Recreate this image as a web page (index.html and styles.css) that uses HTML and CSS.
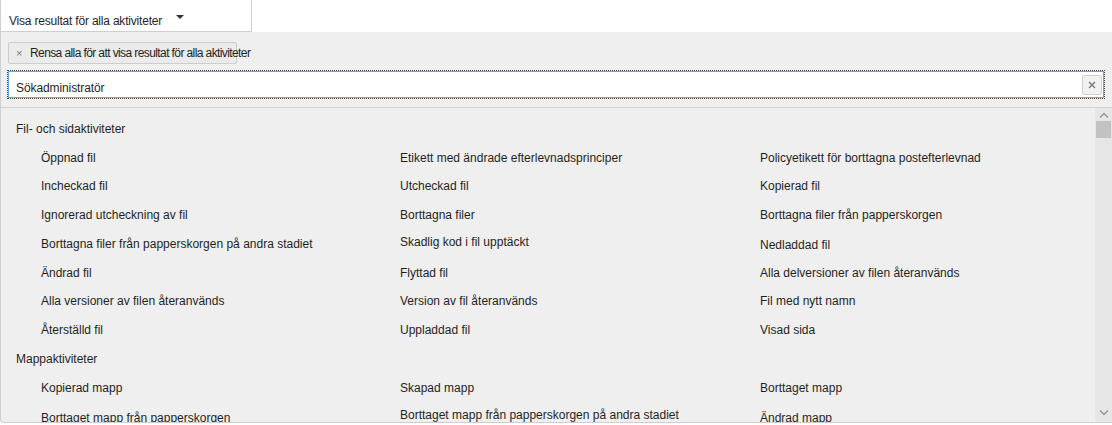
FILE: index.html
```html
<!DOCTYPE html>
<html lang="sv">
<head>
<meta charset="utf-8">
<link rel="stylesheet" href="styles.css">
</head>
<body>
<div class="dropdown">
  <span class="dd-label">Visa resultat för alla aktiviteter</span>
  <span class="dd-caret"></span>
</div>
<div class="panel">
  <div class="chip-row">
    <div class="chip"><span class="chip-x">×</span><span class="chip-text">Rensa alla för att visa resultat för alla aktiviteter</span></div>
  </div>
  <div class="search-row">
    <div class="search">
      <span class="search-text">Sökadministratör</span>
      <span class="clear-btn"><svg width="8" height="8" viewBox="0 0 8 8"><path d="M1 1L7 7M7 1L1 7" stroke="#777" stroke-width="1.4"/></svg></span>
    </div>
  </div>
  <div class="list-area">
    <div class="list">
      <div class="cat">Fil- och sidaktiviteter</div>
      <div class="items">
        <div>Öppnad fil</div><div>Etikett med ändrade efterlevnadsprinciper</div><div>Policyetikett för borttagna postefterlevnad</div>
        <div>Incheckad fil</div><div>Utcheckad fil</div><div>Kopierad fil</div>
        <div>Ignorerad utcheckning av fil</div><div>Borttagna filer</div><div>Borttagna filer från papperskorgen</div>
        <div>Borttagna filer från papperskorgen på andra stadiet</div><div class="up">Skadlig kod i fil upptäckt</div><div class="down">Nedladdad fil</div>
        <div>Ändrad fil</div><div>Flyttad fil</div><div>Alla delversioner av filen återanvänds</div>
        <div>Alla versioner av filen återanvänds</div><div>Version av fil återanvänds</div><div>Fil med nytt namn</div>
        <div>Återställd fil</div><div>Uppladdad fil</div><div>Visad sida</div>
      </div>
      <div class="cat">Mappaktiviteter</div>
      <div class="items items-second">
        <div>Kopierad mapp</div><div>Skapad mapp</div><div>Borttaget mapp</div>
        <div class="down">Borttaget mapp från papperskorgen</div><div class="up">Borttaget mapp från papperskorgen på andra stadiet</div><div class="down">Ändrad mapp</div>
      </div>
    </div>
    <div class="scrollbar">
      <span class="sb-arrow sb-up"><svg width="10" height="6" viewBox="0 0 10 6"><path d="M1 5.5L5 1.5L9 5.5" fill="none" stroke="#8a8a8a" stroke-width="1.2"/></svg></span>
      <span class="sb-thumb"></span>
      <span class="sb-fill"></span>
      <span class="sb-arrow sb-down"><svg width="10" height="6" viewBox="0 0 10 6"><path d="M1 0.5L5 4.5L9 0.5" fill="none" stroke="#8a8a8a" stroke-width="1.2"/></svg></span>
    </div>
  </div>
</div>
</body>
</html>
```
FILE: styles.css
```css
html, body {
  margin: 0;
  padding: 0;
  background: #ffffff;
}
body {
  font-family: "Liberation Sans", Arial, sans-serif;
  font-size: 12px;
  color: #1f1f1f;
  width: 1112px;
  height: 425px;
  overflow: hidden;
}
.dropdown {
  box-sizing: border-box;
  width: 252px;
  height: 32px;
  border: 1px solid #cfcfcf;
  border-top: none;
  background: #ffffff;
  display: flex;
  align-items: center;
  padding: 11px 0 0 8px;
}
.dd-label {
  letter-spacing: -0.2px;
}
.dd-caret {
  margin-left: 14px;
  margin-top: -8px;
  width: 0;
  height: 0;
  border-left: 4px solid transparent;
  border-right: 4px solid transparent;
  border-top: 4px solid #333;
}
.panel {
  box-sizing: border-box;
  width: 1113px;
  height: 391px;
  background: #efefef;
  border: 1px solid #cfcfcf;
  border-top: none;
  border-bottom-left-radius: 4px;
  display: flex;
  flex-direction: column;
  overflow: hidden;
}
.chip-row {
  padding: 10px 0 0 7px;
  height: 22px;
}
.chip {
  box-sizing: border-box;
  width: 229px;
  height: 22px;
  border: 1px solid #cdcdcd;
  border-radius: 2px;
  background: #ebebeb;
  display: flex;
  align-items: center;
  white-space: nowrap;
  overflow: visible;
}
.chip-x {
  flex-shrink: 0;
  color: #777;
  font-size: 11px;
  margin-left: 7px;
  width: 14px;
}
.chip-text {
  flex-shrink: 0;
  letter-spacing: -0.6px;
}
.search-row {
  padding: 7px 0 0 7px;
}
.search {
  box-sizing: border-box;
  width: 1096px;
  height: 27px;
  background: #ffffff;
  border: 1px solid #5fa7e6;
  outline: 1px dotted #444;
  display: flex;
  align-items: center;
  justify-content: space-between;
  padding: 0 1px 0 7px;
}
.search-text {
  letter-spacing: -0.1px;
  padding-top: 7px;
}
.clear-btn {
  box-sizing: border-box;
  width: 20px;
  height: 20px;
  border: 1px solid #cfcfcf;
  border-radius: 2px;
  background: #f1f1f1;
  display: flex;
  align-items: center;
  justify-content: center;
}
.list-area {
  margin-top: 9px;
  border-top: 1px solid #d3d3d3;
  flex: 1;
  display: flex;
  min-height: 0;
}
.list {
  flex: 1;
  padding-top: 7px;
  line-height: 28.7px;
  white-space: nowrap;
  overflow: hidden;
}
.cat {
  padding-left: 15px;
}
.items {
  display: grid;
  grid-template-columns: 359px 360px 1fr;
  padding-left: 40px;
}
.items-second {
  margin-top: 1px;
}
.items .up {
  position: relative;
  top: -2px;
}
.items .down {
  position: relative;
  top: 1px;
}
.scrollbar {
  width: 17px;
  background: #e6e6e6;
  display: flex;
  flex-direction: column;
  align-items: center;
}
.sb-arrow {
  height: 12px;
  display: flex;
  align-items: center;
  justify-content: center;
}
.sb-up {
  margin-top: 1px;
}
.sb-thumb {
  width: 15px;
  height: 17px;
  background: #c2c2c2;
}
.sb-fill {
  flex: 1;
}
.sb-down {
  margin-bottom: 3px;
}
```
